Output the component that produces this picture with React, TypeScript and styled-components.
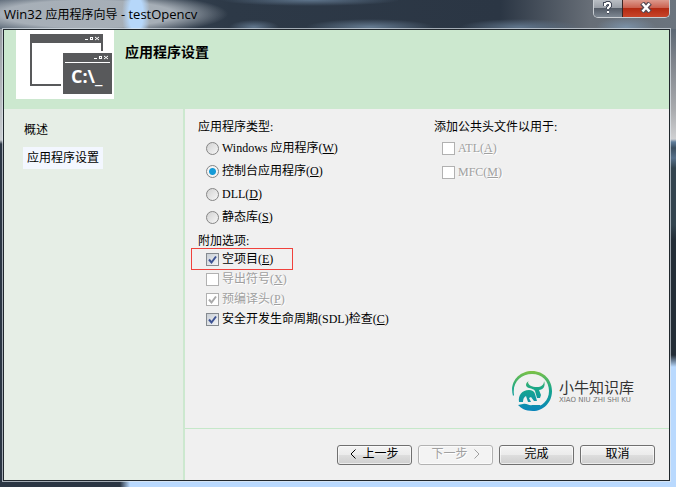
import React from 'react';
import styled, { createGlobalStyle } from 'styled-components';

const songFont = '"Liberation Serif", "Noto Sans CJK SC", serif';
const green = '#cce8cf';

const GlobalStyle = createGlobalStyle`
  *, *::before, *::after { box-sizing: border-box; }
  html, body, #root { height: 100%; }
  body { margin: 0; overflow: hidden; background: #2b3644; }
  button, input { font: inherit; margin: 0; }
`;

const Frame = styled.div`
  display: flex;
  flex-direction: column;
  min-height: 100%;
  padding: 0 6px 6px 3px;
  color: #000;
  font: 12px/16px ${songFont};
  background:
    linear-gradient(180deg, #4c5a69 0, #5d6874 30px, #7d828a 60px, #a9abae 110px, #cfd0d2 139px, #5f7d9b 142px, #3c4f60 148px, #56708a 158px, #33444f 168px, #33444f 225px, #232d37 240px, #232d37 355px, #b9d9fe 367px) right / 6px 100% no-repeat,
    linear-gradient(90deg, #2b3644 120px, #b9d9fe 130px) bottom / 100% 6px no-repeat,
    linear-gradient(180deg, #8c9197 0, #c8ccd0 140px, #2b3644 144px) left / 3px 100% no-repeat,
    #2b3644;
`;

const TitleBar = styled.header`
  display: flex;
  justify-content: space-between;
  align-items: flex-start;
  height: 29px;
  margin: 0 -6px 0 -3px;
  padding: 0 6px 0 4px;
  overflow: hidden;
  background:
    radial-gradient(ellipse 14px 34px at 136px 14px, #b6d7fa 50%, transparent 100%),
    radial-gradient(ellipse 140px 22px at 88px 14px, rgba(172, 180, 188, 0.95) 62%, transparent 100%),
    radial-gradient(ellipse 25px 7px at 254px 27px, #60758b, transparent),
    radial-gradient(ellipse 64px 8px at 370px 27px, #657b91, transparent),
    radial-gradient(ellipse 60px 8px at 520px 27px, #60758b, transparent),
    radial-gradient(ellipse 30px 10px at 626px 27px, #7a90a6, transparent),
    radial-gradient(ellipse 90px 6px at 310px 0, #5e748b, transparent),
    linear-gradient(90deg, #4a5868 0, #2d3947 230px, #2b3644 500px, #676e77 590px, #6b747e 100%);
`;

const Title = styled.h1`
  margin: 5px 0 0;
  font: 13px/18px "Open Sans", "Noto Sans CJK SC", sans-serif;
`;

const TitleHan = styled.span`
  font-size: 12px;
`;

const Captions = styled.div`
  display: flex;
  height: 18px;
  border: 1px solid #c9ced3;
  border-top: 0;
  border-radius: 0 0 5px 5px;
  overflow: hidden;
`;

const CaptionButton = styled.button<{ $close?: boolean }>`
  display: grid;
  place-items: center;
  width: ${p => (p.$close ? 47 : 28)}px;
  padding: 0 0 2px;
  border: 0;
  border-left: ${p => (p.$close ? '1px solid #3b2522' : '0')};
  background: ${p =>
    p.$close
      ? 'linear-gradient(#dc9a8d 0, #cb6250 45%, #b32a12 50%, #c8452a 100%)'
      : 'linear-gradient(#b9bec4 0, #9aa0a8 45%, #555d68 50%, #7d8792 100%)'};
`;

const Dialog = styled.main`
  display: flex;
  flex-direction: column;
  flex: 1;
  border: 1px solid #20272d;
  box-shadow: 0 0 0 1px rgba(226, 234, 240, 0.65);
  background: #f0f0f0;
`;

const Banner = styled.section`
  display: flex;
  gap: 11px;
  height: 79px;
  padding-left: 12px;
  background: ${green};
`;

const BannerArt = styled.svg`
  display: block;
  width: 98px;
  height: 69px;
`;

const BannerTitle = styled.h2`
  margin: 14px 0 0;
  font: bold 14px/18px ${songFont};
`;

const Body = styled.div`
  display: grid;
  grid-template-columns: 181px 1fr;
  flex: 1;
`;

const Sidebar = styled.nav`
  display: flex;
  flex-direction: column;
  align-items: flex-start;
  gap: 9px;
  padding: 13px 19px;
  border-right: 2px solid ${green};
  background: #e6eee6;
`;

const SideLink = styled.a<{ $active?: boolean }>`
  padding: ${p => (p.$active ? '3px 4px' : '0 1px')};
  color: #000;
  text-decoration: none;
  background: ${p => (p.$active ? '#f3f7ff' : 'transparent')};
`;

const Content = styled.form`
  display: flex;
  flex-direction: column;
`;

const Settings = styled.div`
  display: grid;
  grid-template-columns: 236px 1fr;
  flex: 1;
  padding: 10px 12px 0 13px;
`;

const Choices = styled.div`
  display: flex;
  flex-direction: column;
  gap: 6px;
`;

const Group = styled.fieldset<{ $gap: number }>`
  display: flex;
  flex-direction: column;
  align-items: flex-start;
  gap: ${p => p.$gap}px;
  min-width: 0;
  margin: 0;
  padding: 0;
  border: 0;
`;

const Legend = styled.legend<{ $space: number }>`
  margin-bottom: ${p => p.$space}px;
  padding: 0;
`;

const Option = styled.label<{ $disabled?: boolean }>`
  display: flex;
  align-items: center;
  gap: 3px;
  height: 20px;
  padding-left: 8px;
  color: ${p => (p.$disabled ? '#a0a0a0' : '#000')};
  text-shadow: ${p => (p.$disabled ? '1px 1px #fff' : 'none')};
  white-space: nowrap;
`;

const Highlight = styled.div`
  width: 102px;
  height: 22px;
  margin: -1px 0 -1px -7px;
  padding-left: 6px;
  border: 1px solid #f0413c;
`;

const Radio = styled.input`
  appearance: none;
  width: 13px;
  height: 13px;
  border: 1px solid #858585;
  border-radius: 50%;
  background: linear-gradient(135deg, #d2d2d2, #f6f6f6);
  &:checked {
    background: radial-gradient(circle, #169bd7 3px, #f4f4f4 4px);
  }
`;

const Tick = styled.input`
  appearance: none;
  width: 13px;
  height: 13px;
  border: 1px solid #858a8f;
  background: linear-gradient(135deg, #c8ced5, #f4f5f7);
  &:disabled { border-color: #b1b1b1; background: #fff; }
`;

const TickBox = styled.span`
  display: grid;
  & > * { grid-area: 1 / 1; }
  svg { pointer-events: none; }
`;

const Footer = styled.footer`
  display: flex;
  justify-content: flex-end;
  gap: 6px;
  padding: 16px 14px 15px;
  border-top: 1px solid #c5e8c9;
`;

const PushButton = styled.button`
  display: flex;
  align-items: center;
  justify-content: center;
  gap: 6px;
  width: 75px;
  height: 20px;
  padding: 0 0 2px;
  border: 1px solid #707070;
  border-radius: 3px;
  color: #000;
  background: linear-gradient(#f4f4f4 0, #ebebeb 50%, #dddddd 52%, #cfcfcf 100%);
  box-shadow: inset 0 0 0 1px rgba(255, 255, 255, 0.6);
  &:disabled {
    color: #a0a0a0;
    border-color: #b2b2b2;
    background: #f3f3f3;
    text-shadow: 1px 1px #fff;
  }
`;

const Brand = styled.div`
  display: flex;
  align-items: center;
  align-self: flex-end;
  gap: 6px;
  margin: 0 35px 16px 0;
  color: #333;
`;

const BrandText = styled.div`
  font: 15px/18px "Noto Sans CJK SC", sans-serif;
`;

const BrandLatin = styled.div`
  color: #777;
  font: 7px/8px "DejaVu Sans", sans-serif;
  white-space: nowrap;
`;

const Chevron = ({ right }: { right?: boolean }) => (
  <svg width="6" height="10" viewBox="0 0 6 10" fill="none" stroke="currentColor">
    <path d={right ? 'M.5 .5 5 5 .5 9.5' : 'M5.5 .5 1 5l4.5 4.5'} />
  </svg>
);

const OptionText = ({ label, k }: { label: string; k: string }) => (
  <span>{label}(<u>{k}</u>)</span>
);

type CheckProps = { label: string; k: string; checked?: boolean; disabled?: boolean };

const Check = ({ label, k, checked, disabled }: CheckProps) => (
  <Option $disabled={disabled}>
    <TickBox>
      <Tick type="checkbox" defaultChecked={checked} disabled={disabled} />
      {checked && (
        <svg width="13" height="13" viewBox="0 0 13 13" fill="none" stroke={disabled ? '#a9a9a9' : '#3d5293'} strokeWidth="2">
          <path d="M3 6.5 5.5 9.5 10 3.5" />
        </svg>
      )}
    </TickBox>
    <OptionText label={label} k={k} />
  </Option>
);

const appTypes = [
  { label: 'Windows 应用程序', k: 'W' },
  { label: '控制台应用程序', k: 'O' },
  { label: 'DLL', k: 'D' },
  { label: '静态库', k: 'S' },
];

const ConsoleArt = () => (
  <BannerArt viewBox="0 0 98 69" shapeRendering="crispEdges">
    <path fill="#fff" d="M0 0h98v69H0z" />
    <path fill="#58595b" d="M14 4h73v17h-2v-8H16v41h29v2H14zM47 23h49v41H47z" />
    <path fill="#fff" d="M49 32h45v1H49z" />
    <g fill="none" stroke="#fff">
      <path d="M69 9.5h3M74.500 7.500h2v2h-2zM78 28.500h3M83.500 26.500h2v2h-2z" />
      <path d="m79 7 4 3m0-3-4 3M88 26l4 3m0-3-4 3" shapeRendering="auto" />
    </g>
    <text x="55" y="53" fill="#fff" fontFamily="Open Sans" fontWeight="700" fontSize="18">C:\_</text>
  </BannerArt>
);

const BullLogo = () => (
  <svg width="42" height="42" viewBox="0 0 42 42">
    <defs>
      <linearGradient id="ring" gradientUnits="userSpaceOnUse" x1="0" y1="0" x2="0" y2="42">
        <stop offset="0" stopColor="#84c341" />
        <stop offset=".45" stopColor="#17a78b" />
        <stop offset="1" stopColor="#0783bd" />
      </linearGradient>
    </defs>
    <g fill="url(#ring)">
      <path d="M2 26C-2 12 8 1 21 1c12 0 20 9 20 20 0 12-9 20-19 20-8 0-12-3-15-6l5-1c4-1 6 2 9 1l8 0c1 1-1 2-8 2 9 1 17-6 17-16C38 11 31 4 21 4 10 4 1 12 3 25z" />
      <path d="M18 11c-4 2-4 6 0 7 3 1 5 1 6 3l2 7 3 0 1-3-2-5c4 0 7-4 5-9 0 4-3 6-7 6-5 0-9-2-9-5 0-1 0-1 1-1z" />
      <path d="M8 32c-1-7 3-12 10-12 3 0 5 1 6 4l2 7h-3l-3-4-2 1 2 4h-3l-2-6c-2 1-3 3-3 6z" />
    </g>
  </svg>
);

export default function App() {
  return (
    <Frame>
      <GlobalStyle />
      <TitleBar>
        <Title>Win32 <TitleHan>应用程序向导</TitleHan> - testOpencv</Title>
        <Captions>
          <CaptionButton type="button" aria-label="帮助">
            <svg width="10" height="13" viewBox="0 0 10 13" fill="none">
              <path d="M2 5V3h1l1-1h2l1 1v2L5 7v1M4 11h2" stroke="#444b5a" strokeWidth="4" />
              <path d="M2 5V3h1l1-1h2l1 1v2L5 7v1M4 11h2" stroke="#fff" strokeWidth="2" />
            </svg>
          </CaptionButton>
          <CaptionButton type="button" aria-label="关闭" $close>
            <svg width="12" height="11" viewBox="0 0 12 11" fill="none">
              <path d="m2 1 8 9M10 1l-8 9" stroke="#574a54" strokeWidth="5" />
              <path d="m2.500 1.500 7 8M9.500 1.500l-7 8" stroke="#fff" strokeWidth="2.500" />
            </svg>
          </CaptionButton>
        </Captions>
      </TitleBar>
      <Dialog>
        <Banner>
          <ConsoleArt />
          <BannerTitle>应用程序设置</BannerTitle>
        </Banner>
        <Body>
          <Sidebar>
            <SideLink href="#overview">概述</SideLink>
            <SideLink href="#settings" $active>应用程序设置</SideLink>
          </Sidebar>
          <Content onSubmit={e => e.preventDefault()}>
            <Settings>
              <Choices>
                <Group $gap={3}>
                  <Legend $space={3}>应用程序类型:</Legend>
                  {appTypes.map(t => (
                    <Option key={t.k}>
                      <Radio type="radio" name="appType" defaultChecked={t.k === 'O'} />
                      <OptionText label={t.label} k={t.k} />
                    </Option>
                  ))}
                </Group>
                <Group $gap={0}>
                  <Legend $space={0}>附加选项:</Legend>
                  <Highlight><Check label="空项目" k="E" checked /></Highlight>
                  <Check label="导出符号" k="X" disabled />
                  <Check label="预编译头" k="P" checked disabled />
                  <Check label="安全开发生命周期(SDL)检查" k="C" checked />
                </Group>
              </Choices>
              <Group $gap={4}>
                <Legend $space={3}>添加公共头文件以用于:</Legend>
                <Check label="ATL" k="A" disabled />
                <Check label="MFC" k="M" disabled />
              </Group>
            </Settings>
            <Brand>
              <BullLogo />
              <div>
                <BrandText>小牛知识库</BrandText>
                <BrandLatin>XIAO NIU ZHI SHI KU</BrandLatin>
              </div>
            </Brand>
            <Footer>
              <PushButton type="button"><Chevron />上一步</PushButton>
              <PushButton type="button" disabled>下一步<Chevron right /></PushButton>
              <PushButton type="submit">完成</PushButton>
              <PushButton type="button">取消</PushButton>
            </Footer>
          </Content>
        </Body>
      </Dialog>
    </Frame>
  );
}
